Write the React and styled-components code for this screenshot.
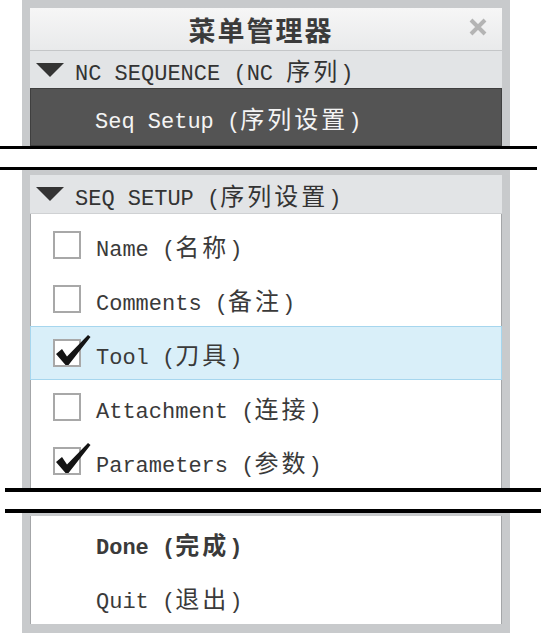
import React from "react";
import styled, { createGlobalStyle } from "styled-components";

const GlobalStyle = createGlobalStyle`
  html, body {
    margin: 0;
    padding: 0;
    background: #ffffff;
  }
  body {
    font-family: "Liberation Mono", "Noto Sans CJK SC", monospace;
  }
`;

const Page = styled.div`
  width: 543px;
  height: 634px;
  display: flex;
  flex-direction: column;
  overflow: hidden;
`;

// one slice of the menu manager window, with its grey frame
const Panel = styled.div`
  width: 472px;
  margin-left: 22px;
  border: 8px solid #c8cacc;
  border-top-width: ${(p) => p.$top}px;
  border-bottom-width: ${(p) => p.$bottom}px;
  box-shadow: -1px 0 0 #a4a6a8 inset, 1px 0 0 #a4a6a8 inset;
  background: #ffffff;
  display: flex;
  flex-direction: column;
`;

// the two black lines marking a cut in the screenshot
const Break = styled.div`
  margin-left: ${(p) => p.$left}px;
  width: ${(p) => p.$width}px;
  height: ${(p) => p.$gap}px;
  border-top: ${(p) => p.$line}px solid #000;
  border-bottom: ${(p) => p.$line}px solid #000;
  background: #fff;
`;

const TitleBar = styled.div`
  height: 42px;
  display: grid;
  grid-template-columns: 1fr auto 1fr;
  align-items: center;
  background: linear-gradient(#f6f6f6, #e9eaeb);
  border-bottom: 1px solid #c4c6c8;
`;

const Title = styled.div`
  grid-column: 2;
  margin-right: 10px;
  font-family: "Noto Sans CJK SC", sans-serif;
  font-weight: 700;
  font-size: 27px;
  color: #3b3b3b;
  letter-spacing: 2px;
`;

const Close = styled.svg`
  grid-column: 3;
  justify-self: end;
  margin-right: 14px;
  margin-top: -4px;
`;

const GroupHeader = styled.div`
  height: ${(p) => p.$h}px;
  display: flex;
  align-items: center;
  padding-left: 6px;
  background: #e2e4e6;
  border-bottom: ${(p) => (p.$line ? "1px solid #cfd1d3" : "none")};
  font-size: 22px;
  color: #333;
  white-space: pre;
`;

const Triangle = styled.span`
  width: 0;
  height: 0;
  margin-right: 11px;
  border-left: 14px solid transparent;
  border-right: 14px solid transparent;
  border-top: 14px solid #343434;
`;

const Cjk = styled.span`
  font-family: "Noto Sans CJK SC", sans-serif;
  font-size: 24px;
  letter-spacing: 3px;
`;

const ActiveItem = styled.div`
  height: 58px;
  display: flex;
  align-items: center;
  padding-left: 65px;
  background: #545454;
  box-shadow: 0 0 0 1px #3f3f3f inset;
  font-size: 22px;
  color: #f4f4f4;
  white-space: pre;
`;

const List = styled.div`
  display: flex;
  flex-direction: column;
  padding-top: ${(p) => p.$pad}px;
`;

const Row = styled.div`
  height: 54px;
  box-sizing: border-box;
  display: flex;
  align-items: center;
  padding-left: ${(p) => (p.$plain ? 65 : 22)}px;
  background: ${(p) => (p.$hi ? "#d9eff9" : "transparent")};
  border: 1px solid ${(p) => (p.$hi ? "#a6d6ee" : "transparent")};
  font-size: 22px;
  font-weight: ${(p) => (p.$bold ? 700 : 400)};
  color: #3a3a3a;
  white-space: pre;
`;

const Box = styled.span`
  position: relative;
  width: 28px;
  height: 28px;
  margin-right: 15px;
  box-sizing: border-box;
  border: 2px solid #a8a8a8;
  background: #fff;
  flex: none;
`;

const Tick = styled.svg`
  position: absolute;
  left: -2px;
  top: -9px;
`;

function Check({ on }) {
  return (
    <Box>
      {on && (
        <Tick width="42" height="38" viewBox="0 0 42 38">
          <path
            d="M3 22 L9 17 L14 24.5 L35 3 L37.5 5 L15.5 33 L12.5 33 Z"
            fill="#141414"
          />
        </Tick>
      )}
    </Box>
  );
}

function Label({ en, pre = "", zh }) {
  return (
    <span>
      {en} ({pre}
      <Cjk>{zh}</Cjk>)
    </span>
  );
}

const items = [
  { en: "Name", zh: "名称", on: false },
  { en: "Comments", zh: "备注", on: false },
  { en: "Tool", zh: "刀具", on: true, hi: true },
  { en: "Attachment", zh: "连接", on: false },
  { en: "Parameters", zh: "参数", on: true },
];

export default function App() {
  return (
    <Page>
      <GlobalStyle />
      <Panel $top={8} $bottom={0}>
        <TitleBar>
          <Title>菜单管理器</Title>
          <Close width="20" height="20" viewBox="0 0 20 20">
            <path d="M3 3 L17 17 M17 3 L3 17" stroke="#b4b4b4" strokeWidth="4" />
          </Close>
        </TitleBar>
        <GroupHeader $h={37}>
          <Triangle />
          <Label en="NC SEQUENCE" pre="NC " zh="序列" />
        </GroupHeader>
        <ActiveItem>
          <Label en="Seq Setup" zh="序列设置" />
        </ActiveItem>
      </Panel>
      <Break $left={0} $width={537} $line={3} $gap={18} />
      <Panel $top={5} $bottom={0}>
        <GroupHeader $h={38} $line>
          <Triangle />
          <Label en="SEQ SETUP" zh="序列设置" />
        </GroupHeader>
        <List $pad={4}>
          {items.map((it) => (
            <Row key={it.en} $hi={it.hi}>
              <Check on={it.on} />
              <Label en={it.en} zh={it.zh} />
            </Row>
          ))}
        </List>
      </Panel>
      <Break $left={5} $width={536} $line={4} $gap={17} />
      <Panel $top={3} $bottom={9}>
        <List $pad={0}>
          <Row $plain $bold>
            <Label en="Done" zh="完成" />
          </Row>
          <Row $plain>
            <Label en="Quit" zh="退出" />
          </Row>
        </List>
      </Panel>
    </Page>
  );
}
